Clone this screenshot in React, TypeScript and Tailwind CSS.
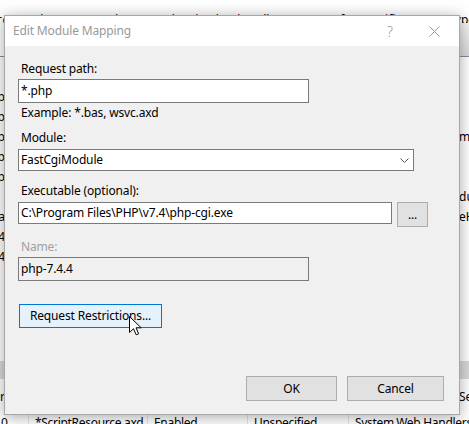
import React from "react";

const F = { fontFamily: '"Noto Sans", "Segoe UI", sans-serif' };

function BgRow({ left, right, h = 20 }: { left?: string; right?: string; h?: number }) {
  return (
    <div className="flex items-center text-[12px] text-black" style={{ height: h }}>
      <div className="w-[5px] overflow-hidden flex justify-end whitespace-nowrap">
        <span>{left ?? ""}</span>
      </div>
      <div className="flex-1" />
      <div className="w-[10px] overflow-hidden whitespace-nowrap">{right ?? ""}</div>
    </div>
  );
}

function Cursor() {
  return (
    <svg width="13" height="20" viewBox="0 0 13 20" className="absolute left-[129px] top-[316px]">
      <path
        d="M0.5 0.5 L0.5 16.5 L4.5 12.7 L7.2 18.8 L9.6 17.8 L7 11.8 L12.2 11.8 Z"
        fill="#fff"
        stroke="#000"
        strokeWidth="1"
        strokeLinejoin="miter"
      />
    </svg>
  );
}

export default function App() {
  return (
    <div className="relative w-[469px] h-[424px] overflow-hidden bg-white" style={F}>
      {/* Background application */}
      <div className="flex flex-col w-full">
        <div className="h-[12px]" />
        <div className="h-[11px] whitespace-nowrap text-[12px] leading-[16px] text-black ml-[-40px] overflow-visible">
          resources, such as DLLs and managed code, that handle responses for specific request types.
        </div>
        <div className="flex h-[34px] border-b border-[#8a8a99]">
          <div className="flex-1 bg-white" />
          <div className="w-[10px] bg-gradient-to-b from-[#f4f4f4] to-[#d9d9d9]" />
        </div>
        <div className="h-[10px]" />
        <BgRow />
        <BgRow left="php" />
        <BgRow left="php" />
        <BgRow left="php" right="mo" />
        <BgRow left="php" />
        <BgRow left="php" />
        <BgRow right="du" />
        <BgRow left="a" right="eH" />
        <BgRow left="4" />
        <BgRow left="4" />
        <BgRow />
        <BgRow />
        <BgRow />
        <BgRow h={34} />
        <div className="h-[18px] bg-[#d9d9d9]" />
        <div className="h-[34px] flex items-center text-[12px] pt-[2px]">
          <div className="w-[5px] overflow-hidden flex justify-end"><span>r</span></div>
          <div className="flex-1" />
          <div className="w-[10px] overflow-hidden whitespace-nowrap">Se</div>
        </div>
        <div className="h-[20px] flex text-[12px] whitespace-nowrap leading-[20px] tracking-[-0.3px]">
          <div className="w-[29px] shrink-0 border-r border-[#e5e5e5] overflow-hidden pl-[1px]">0</div>
          <div className="w-[119px] shrink-0 border-r border-[#e5e5e5] overflow-hidden pl-[6px]">*ScriptResource.axd</div>
          <div className="w-[100px] shrink-0 border-r border-[#e5e5e5] overflow-hidden pl-[6px]">Enabled</div>
          <div className="w-[101px] shrink-0 border-r border-[#e5e5e5] overflow-hidden pl-[6px]">Unspecified</div>
          <div className="pl-[6px]">System.Web.Handlers</div>
        </div>
      </div>

      {/* Dialog window */}
      <div className="absolute left-[4px] top-[15px] w-[456px] h-[400px] flex flex-col bg-[#f0f0f0] border border-[#a8a8a8] shadow-[0_2px_14px_rgba(0,0,0,0.35)] tracking-[-0.15px]">
        <div className="h-[30px] bg-white flex items-center text-[12px] text-[#999999] shrink-0">
          <div className="pl-[8px] flex-1">Edit Module Mapping</div>
          <div className="w-[20px] text-center text-[14px] mr-[29px] font-light">?</div>
          <svg width="11" height="11" viewBox="0 0 11 11" className="mr-[19px]">
            <path d="M0.5 0.5 L10.5 10.5 M10.5 0.5 L0.5 10.5" stroke="#999" strokeWidth="1" />
          </svg>
        </div>

        <div className="flex-1 flex flex-col pl-[13px] pr-[14px] text-[12px] text-black">
          <div className="mt-[15px] leading-[16px] pl-[3px]">Request path:</div>
          <div className="mt-[2px] w-[291px] h-[24px] bg-white border border-[#7a7a7a] flex items-center pl-[2px]">*.php</div>
          <div className="mt-[2px] leading-[16px] pl-[3px]">Example: *.bas, wsvc.axd</div>

          <div className="mt-[9px] leading-[16px] pl-[3px]">Module:</div>
          <div className="mt-[3px] w-[396px] h-[22px] bg-white border border-[#7a7a7a] flex items-center pl-[2px]">
            <div className="flex-1">FastCgiModule</div>
            <svg width="9" height="5" viewBox="0 0 9 5" className="mr-[4px]">
              <path d="M0.5 0.5 L4.5 4.5 L8.5 0.5" stroke="#555" strokeWidth="1" fill="none" />
            </svg>
          </div>

          <div className="mt-[12px] leading-[16px] pl-[3px]">Executable (optional):</div>
          <div className="mt-[3px] flex items-start">
            <div className="w-[374px] h-[22px] bg-white border border-[#7a7a7a] flex items-center pl-[2px] whitespace-nowrap">
              C:\Program Files\PHP\v7.4\php-cgi.exe
            </div>
            <div className="ml-[5px] w-[31px] h-[25px] bg-[#e1e1e1] border border-[#adadad] flex items-center justify-center">...</div>
          </div>

          <div className="mt-[12px] leading-[16px] pl-[3px] text-[#a0a0a0]">Name:</div>
          <div className="mt-[2px] w-[291px] h-[24px] border border-[#7a7a7a] flex items-center pl-[2px]">php-7.4.4</div>

          <div className="mt-[23px] ml-[1px] w-[143px] h-[24px] bg-[#e5f1fb] border border-[#0078d7] flex items-center justify-center">
            Request Restrictions...
          </div>

          <div className="mt-auto mb-[13px] flex justify-end gap-[10px] pr-[1px]">
            <div className="w-[91px] h-[25px] bg-[#e1e1e1] border border-[#adadad] flex items-center justify-center">OK</div>
            <div className="w-[97px] h-[25px] bg-[#e1e1e1] border border-[#adadad] flex items-center justify-center">Cancel</div>
          </div>
        </div>
      </div>

      <Cursor />
    </div>
  );
}
